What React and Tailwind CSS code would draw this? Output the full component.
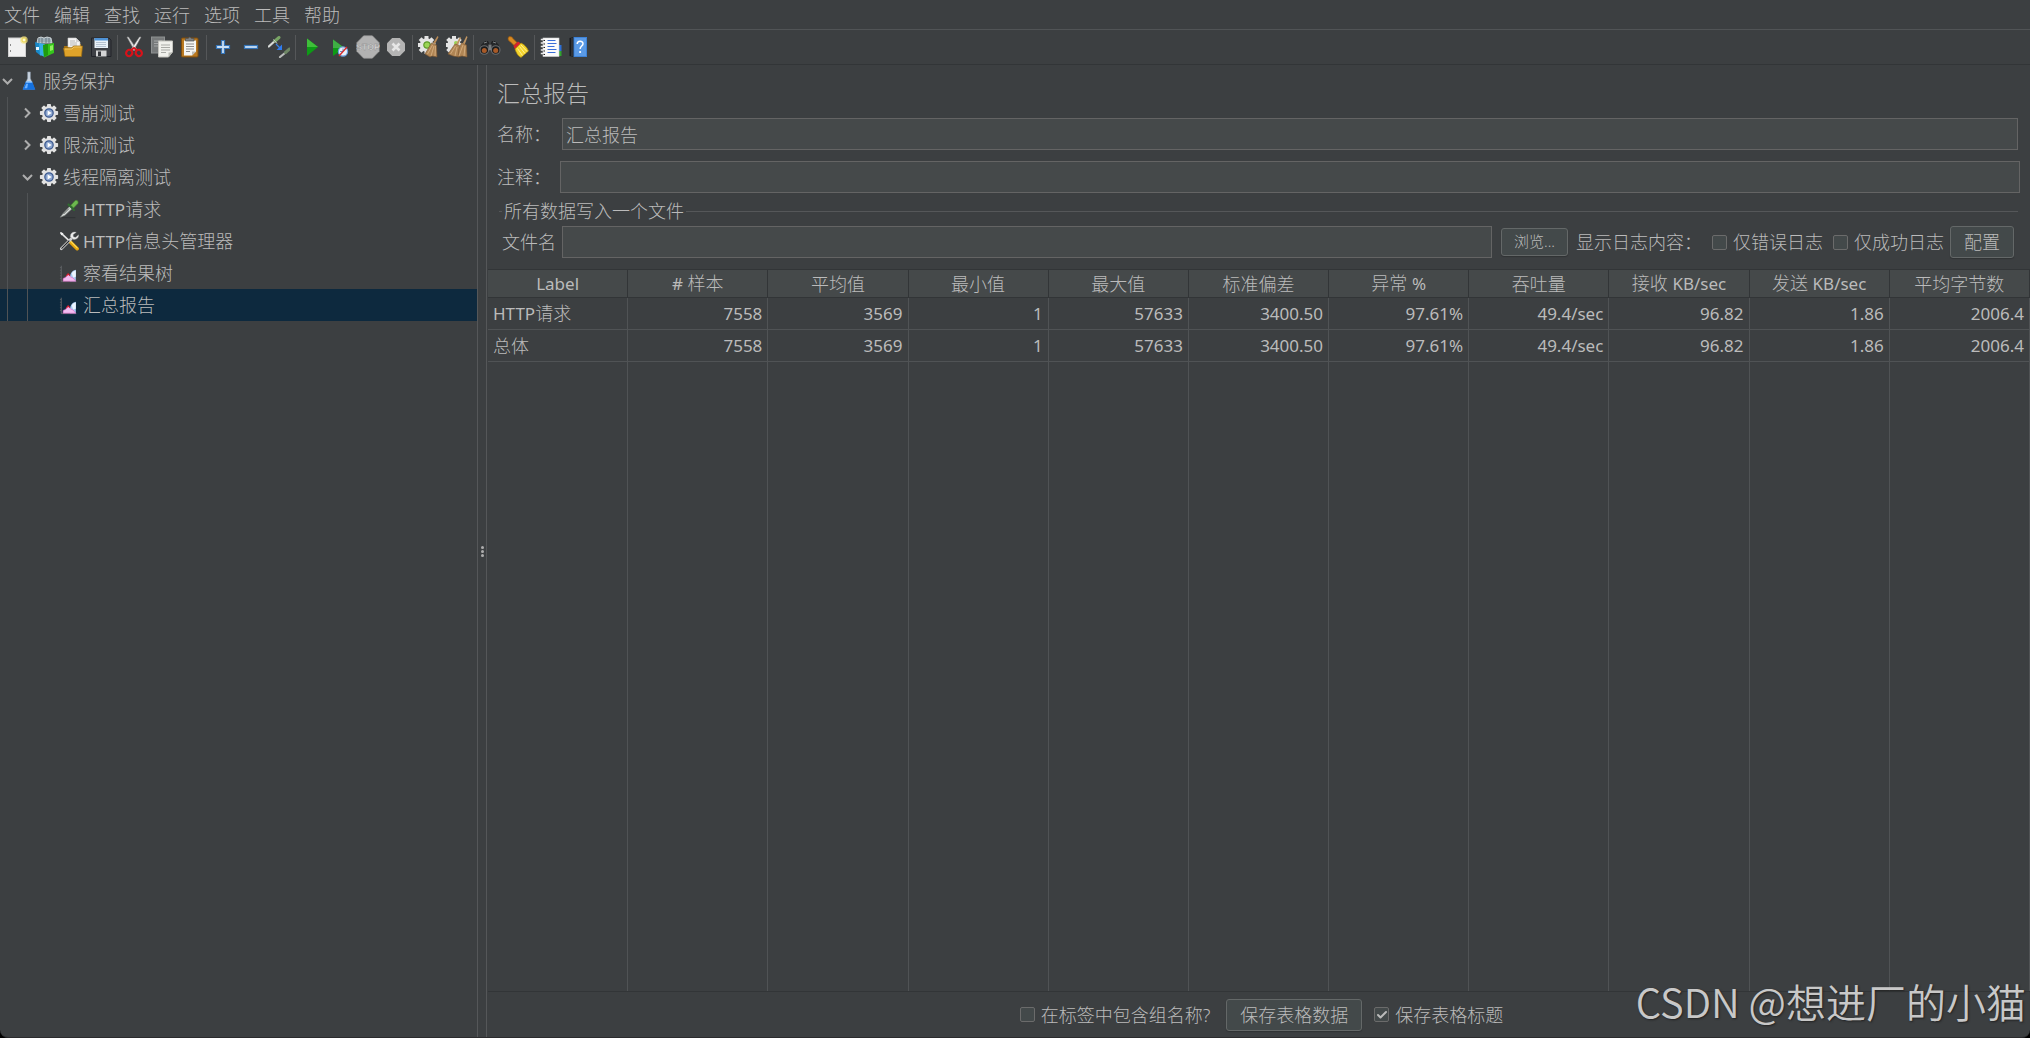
import { useState } from 'react';
import { Check } from 'lucide-react';

const menus = ['文件', '编辑', '查找', '运行', '选项', '工具', '帮助'];

const columns = ['Label', '# 样本', '平均值', '最小值', '最大值', '标准偏差', '异常 %', '吞吐量', '接收 KB/sec', '发送 KB/sec', '平均字节数'];

const rows = [
    ['HTTP请求', '7558', '3569', '1', '57633', '3400.50', '97.61%', '49.4/sec', '96.82', '1.86', '2006.4'],
    ['总体', '7558', '3569', '1', '57633', '3400.50', '97.61%', '49.4/sec', '96.82', '1.86', '2006.4'],
];

/* ---------- toolbar icons ---------- */

function Svg({ children, size = 'size-[22px]' }) {
    return (
        <svg viewBox="0 0 22 22" className={`${size} block shrink-0`} fill="none" aria-hidden="true">
            {children}
        </svg>
    );
}

const NewIcon = () => (
    <Svg>
        <rect x="2.5" y="2" width="17" height="18.5" fill="#f1f1f1" stroke="#cfcfcf" />
        <path d="M4.5 8v2M4.5 14v2" stroke="#8b8b8b" />
        <circle cx="18" cy="4" r="3.8" fill="#f3e27a" opacity=".7" />
        <circle cx="18" cy="4" r="2" fill="#fffbd0" stroke="#e3c934" strokeWidth=".8" />
    </Svg>
);

const TemplatesIcon = () => (
    <Svg>
        <path d="M3 7L4 2l3-1 3 1 3-1 4 1 1 5z" fill="#9fb0b8" stroke="#dfe6e9" strokeWidth=".8" />
        <path d="M5 2v5M8 2v5M12 2v5M15 2v5" stroke="#5d6b73" strokeWidth=".8" />
        <path d="M1 6l6 2v12l-5-4z" fill="#1888c8" />
        <path d="M5 7l6 1v13l-5-2z" fill="#36aee6" />
        <path d="M9 9l11-2v10l-10 4.500z" fill="#35c41c" />
        <path d="M9 9l5-1v11l-4 2z" fill="#1f9b10" />
        <path d="M16 10l3-1v5l-3 1z" fill="#8ff05d" />
        <rect x="2" y="11" width="3" height="3" fill="#e8f6ff" />
    </Svg>
);

const OpenIcon = () => (
    <Svg>
        <path d="M2 10h4l1-2h12v12H3z" fill="#a87410" />
        <path d="M6 11V2h8l4 4v6z" fill="#f4f4f4" stroke="#c9c9c9" strokeWidth=".6" />
        <path d="M14 2v4h4" fill="#d4d4d4" />
        <path d="M8 5h5M8 7h7M8 9h7" stroke="#a9a9a9" strokeWidth=".8" />
        <path d="M1.5 12h8l2-2h9l-1 10.5H3z" fill="#dfa32a" stroke="#9b6b10" strokeWidth=".7" />
        <path d="M3 13h7l2-2h7.5" stroke="#f5cf70" strokeWidth=".8" />
    </Svg>
);

const SaveIcon = () => (
    <Svg>
        <path d="M1.5 2h17.5l2 2v16.5H1.5z" fill="#3e4045" stroke="#22242a" />
        <rect x="4.5" y="2" width="13.5" height="10" fill="#eaf1f8" />
        <rect x="4.5" y="2" width="13.5" height="2.5" fill="#4f93d6" />
        <path d="M6 6.5h10M6 8.5h10M6 10.5h10" stroke="#a9b8c6" strokeWidth=".8" />
        <rect x="6" y="14.5" width="10.5" height="6" fill="#d4d5d6" />
        <rect x="8" y="15.5" width="3" height="4.5" fill="#33353a" />
    </Svg>
);

const CutIcon = () => (
    <Svg>
        <path d="M4 1l1.5 0 8 12-2 1.5z" fill="#e2e2e2" stroke="#8e8e8e" strokeWidth=".6" />
        <path d="M18 1l-1.5 0-8 12 2 1.5z" fill="#f4f4f4" stroke="#8e8e8e" strokeWidth=".6" />
        <ellipse cx="6.200" cy="17" rx="3" ry="3.300" stroke="#d8121a" strokeWidth="2.200" transform="rotate(35 6.200 17)" />
        <ellipse cx="15.800" cy="17" rx="3" ry="3.300" stroke="#d8121a" strokeWidth="2.200" transform="rotate(-35 15.800 17)" />
        <path d="M8 14l3-2 3 2" stroke="#d8121a" strokeWidth="2" />
    </Svg>
);

const CopyIcon = () => (
    <Svg>
        <rect x="0.5" y="1" width="13" height="16" fill="#777a7b" stroke="#8e9192" />
        <path d="M3 5h8M3 7.5h8M3 10h5" stroke="#a5a7a8" />
        <path d="M7.5 5h14v11l-4 5h-10z" fill="#f0f0ec" stroke="#c4c4be" />
        <path d="M10 9h9M10 11.5h9M10 14h9M10 16.5h5" stroke="#a9aaa6" />
        <path d="M17.5 21v-4.5h4z" fill="#b9bab4" />
    </Svg>
);

const PasteIcon = () => (
    <Svg>
        <rect x="2.5" y="2" width="16.5" height="19" rx="1" fill="#b9781f" stroke="#7c4c0e" />
        <path d="M5 4.5h12v11l-4 4H5z" fill="#f5f5f2" />
        <path d="M7 8h8M7 10.5h8M7 13h8M7 15.5h4" stroke="#8d8d8d" />
        <path d="M13 19.5v-4h4z" fill="#bdbdb8" />
        <path d="M6.5 5V2.5h2.500L10.800 1l1.800 1.500H15V5z" fill="#7f8284" stroke="#4d5052" strokeWidth=".7" />
    </Svg>
);

const PlusIcon = () => (
    <Svg>
        <path d="M9.5 4.5h3v5h5v3h-5v5h-3v-5h-5v-3h5z" fill="#c9dff5" stroke="#3474b8" strokeWidth="1.2" />
    </Svg>
);

const MinusIcon = () => (
    <Svg>
        <rect x="4.5" y="9.5" width="13" height="3" fill="#c9dff5" stroke="#3474b8" strokeWidth="1.2" />
    </Svg>
);

const ToggleIcon = () => (
    <Svg>
        <path d="M.8 10.5l6-5.500" stroke="#d7dad8" strokeWidth="2.2" strokeLinecap="round" />
        <path d="M7 5l4-3.500" stroke="#79a565" strokeWidth="3" strokeLinecap="round" />
        <path d="M5.5 3.5l3.500 4" stroke="#d0d4d1" strokeWidth="1" />
        <path d="M8 8l4.5 4.5" stroke="#3b82e8" strokeWidth="1.3" />
        <path d="M14 8.5v5.500H8.500z" fill="#2f7cf0" />
        <path d="M12 21l5-4" stroke="#b9bcba" strokeWidth="2.2" strokeLinecap="round" />
        <path d="M17.5 16.5l4-3.500" stroke="#6e8765" strokeWidth="3" strokeLinecap="round" />
    </Svg>
);

const StartIcon = () => (
    <Svg>
        <path d="M6 2.5L17 11 6 20z" fill="#0e9a16" />
        <path d="M6 2.5L17 11H6z" fill="#3fbf3a" />
    </Svg>
);

const StartNoPauseIcon = () => (
    <Svg>
        <path d="M4 3.5L15.500 12 4 20z" fill="#0e9a16" />
        <path d="M4 3.5L15.500 12H4z" fill="#3fae45" />
        <circle cx="14" cy="15.5" r="4.6" fill="#e9f1fb" stroke="#6d9fdd" strokeWidth="1.2" />
        <path d="M14 12.5v3h-3" stroke="#4a78b5" strokeWidth=".8" />
        <path d="M10 20l8-9" stroke="#d92a2a" strokeWidth="1.4" />
    </Svg>
);

const StopIcon = () => (
    <Svg size="size-6">
        <path d="M7 .8h8L21.200 7v8L15 21.200H7L.8 15V7z" fill="#b2b2b2" stroke="#a0a0a0" strokeWidth=".6" />
        <text x="11" y="14" textAnchor="middle" fontSize="8" fontWeight="bold" fill="#dedede" stroke="#858585" strokeWidth=".3" fontFamily="Liberation Sans, sans-serif">STOP</text>
    </Svg>
);

const ShutdownIcon = () => (
    <Svg>
        <path d="M7.200 2h7.600L20 7.200v7.600L14.800 20H7.200L2 14.800V7.200z" fill="#b4b4b4" />
        <path d="M7.5 7.5l7 7M14.5 7.5l-7 7" stroke="#e6e6e6" strokeWidth="2.6" />
    </Svg>
);

const gearTeeth = [0, 45, 90, 135, 180, 225, 270, 315];

const ClearIcon = () => (
    <Svg>
        {gearTeeth.map((a) => (
            <rect key={a} x="6.5" y="0" width="4" height="4" fill="#e4e4e4" transform={`rotate(${a} 8.5 9)`} />
        ))}
        <circle cx="8.5" cy="9" r="6.8" fill="#e4e4e4" />
        <circle cx="9" cy="9" r="3.2" fill="#9ad455" stroke="#5f9b2b" strokeWidth="1.2" />
        <path d="M19.5 0l1 1-3.500 7-2-1z" fill="#b98a55" />
        <path d="M13.500 7l5 2 .5 12-5-1-2 1-5-3z" fill="#b08554" stroke="#7a5630" strokeWidth=".6" />
        <path d="M14.5 9l-5 9M16 10l-3 10M17.5 10l-.5 10" stroke="#d8b285" strokeWidth=".8" />
    </Svg>
);

const ClearAllIcon = () => (
    <Svg>
        {gearTeeth.map((a) => (
            <rect key={a} x="6" y="0" width="4" height="4" fill="#e4e4e4" transform={`rotate(${a} 8 9)`} />
        ))}
        <circle cx="8" cy="9" r="6.8" fill="#e4e4e4" />
        <circle cx="10" cy="7" r="2" fill="#9ad455" />
        <path d="M14 1l1 1-3 7-2-1zM20.5 0l1 1-3 8-2-1z" fill="#c09562" />
        <path d="M9 8l4.500 1.500L13 21l-6-1-5-2z" fill="#b08554" stroke="#7a5630" strokeWidth=".6" />
        <path d="M15.5 7l5 2 .5 12-5-1-4 1 1-8z" fill="#b08554" stroke="#7a5630" strokeWidth=".6" />
        <path d="M9.5 10l-5 8M11 11l-2 9M17 9l-4 11M19 10l-1 10" stroke="#d8b285" strokeWidth=".8" />
    </Svg>
);

const SearchIcon = () => (
    <Svg>
        <path d="M6 5.5l3 0 1 3h2l1-3h3l3 3 1.500 6H1L3 8.500z" fill="#26282a" stroke="#151617" strokeWidth=".6" />
        <path d="M5 7l3-1M14 6l3 1" stroke="#7e8386" strokeWidth="1" />
        <circle cx="5.3" cy="14" r="4.3" fill="#1b1c1d" stroke="#6a6d70" strokeWidth="1.1" />
        <circle cx="16.7" cy="14" r="4.3" fill="#1b1c1d" stroke="#6a6d70" strokeWidth="1.1" />
        <circle cx="5.3" cy="14.5" r="2.5" fill="#a85a28" />
        <circle cx="16.7" cy="14.5" r="2.5" fill="#a85a28" />
        <rect x="9.5" y="8.5" width="3" height="6" fill="#7b7e80" />
    </Svg>
);

const ResetSearchIcon = () => (
    <Svg>
        <path d="M1.5 1c2-1 4 0 4.500 1.500l4 4-3 3-4-4C1.500 5 .5 3 1.500 1z" fill="#d98a22" stroke="#8f5510" strokeWidth=".7" />
        <path d="M6.5 10L11 5.500l3 2L8 13.500z" fill="#d8232a" />
        <path d="M8 13l6-6c3 1.500 6 4 7.500 8L14 21.500C10.500 20 9 16 8 13z" fill="#f3d32c" stroke="#a8870d" strokeWidth=".7" />
        <path d="M10.5 12.5l5 7M12.5 10.5l5.500 7M14 9l6 6.500" stroke="#fff4a0" strokeWidth=".9" />
    </Svg>
);

const FunctionHelperIcon = () => (
    <Svg>
        <rect x="18" y="9" width="3.5" height="6" fill="#2c6fd6" />
        <rect x="18" y="15" width="3.5" height="5" fill="#2fa32f" />
        <rect x="3" y="2" width="16" height="18.5" fill="#fbfbfb" stroke="#d2d2d2" strokeWidth=".6" />
        <path d="M7.500 4.500h8M7.500 7.500h9M7.500 10.500h7M7.500 13.500h9M7.500 16.500h8" stroke="#3a6ed8" strokeWidth="1" />
        <path d="M.8 3.500h4M.8 7h4M.8 10.500h4M.8 14h4M.8 17.500h4" stroke="#e8e8e8" strokeWidth="1.4" />
        <path d="M3.5 4.500h1.500M3.5 8h1.500M3.5 11.500h1.500M3.5 15h1.500M3.5 18.500h1.500" stroke="#222" strokeWidth="1" />
    </Svg>
);

const HelpIcon = () => (
    <Svg>
        <path d="M1.500 2L6 1v20l-4.500-1z" fill="#17191c" />
        <path d="M4 2v18" stroke="#5c6066" strokeWidth=".7" />
        <rect x="5.5" y="1" width="13.5" height="20" fill="#3e83d8" />
        <rect x="6.5" y="2" width="11.5" height="18" fill="#5a9ae6" />
        <path d="M9.200 8c0-3.700 5.800-3.700 5.800-.3 0 2.300-2.900 2.500-2.900 5.300" stroke="#fff" strokeWidth="1.500" />
        <circle cx="12.1" cy="16" r="1.1" fill="#fff" />
    </Svg>
);

const toolbar = [
    [['新建', NewIcon], ['模板', TemplatesIcon], ['打开', OpenIcon], ['保存', SaveIcon]],
    [['剪切', CutIcon], ['复制', CopyIcon], ['粘贴', PasteIcon]],
    [['展开', PlusIcon], ['折叠', MinusIcon], ['切换', ToggleIcon]],
    [['启动', StartIcon], ['不停顿启动', StartNoPauseIcon], ['停止', StopIcon], ['关闭', ShutdownIcon]],
    [['清除', ClearIcon], ['清除全部', ClearAllIcon]],
    [['搜索', SearchIcon], ['重置搜索', ResetSearchIcon]],
    [['函数助手', FunctionHelperIcon], ['帮助', HelpIcon]],
];

/* ---------- tree icons ---------- */

const FlaskIcon = () => (
    <Svg size="size-5">
        <path d="M9.500 1h3v7l4.500 12H4.500L9.500 8z" fill="#c9d4e0" stroke="#8697a9" strokeWidth=".6" />
        <path d="M7.300 12h7.400l3.300 8.500H4z" fill="#1471e0" />
        <path d="M8 14l-2 5h3l1-5z" fill="#6db2ff" />
        <ellipse cx="11" cy="12" rx="3.7" ry="1" fill="#8cc4ff" />
    </Svg>
);

const GearIcon = () => (
    <Svg size="size-5">
        {gearTeeth.map((a) => (
            <rect key={a} x="8.8" y="1" width="4.4" height="5" rx=".8" fill="#e2e2e2" transform={`rotate(${a} 11 11)`} />
        ))}
        <circle cx="11" cy="11" r="7.800" fill="#e2e2e2" />
        <circle cx="11" cy="11" r="4.600" fill="#8ba5cf" stroke="#3d5a90" strokeWidth="1.400" />
        <path d="M9.500 8.200l4.500 2.800-4.500 2.800z" fill="#fff" />
    </Svg>
);

const PipetteIcon = () => (
    <Svg size="size-5">
        <path d="M3 20.500h15" stroke="#303234" strokeWidth="1.200" />
        <path d="M1.500 20l3-4L12 8l2.500 2.500-8 7.500z" fill="#d9dddb" stroke="#8a8f8c" strokeWidth=".7" />
        <path d="M5 16.500l6-6" stroke="#4f5452" strokeWidth="1" />
        <path d="M10.500 6l6 6" stroke="#2f6a2f" strokeWidth="2.400" strokeLinecap="round" />
        <path d="M13 7l4.500-5c2-1.500 4.500.5 3.300 3L16 10z" fill="#6db84f" stroke="#3d7f2d" strokeWidth=".7" />
    </Svg>
);

const ToolsIcon = () => (
    <Svg size="size-5">
        <path d="M2 2l10 9.500" stroke="#e6e6e6" strokeWidth="1.800" />
        <path d="M1 1l4 1.500-2.500 2.500z" fill="#f2f2f2" />
        <path d="M12.500 12l7.500 7.500" stroke="#e5a50f" strokeWidth="3.800" strokeLinecap="round" />
        <path d="M13 11.500l7 7" stroke="#ffdf58" strokeWidth="1.200" strokeLinecap="round" />
        <path d="M13.500 8.500L2.500 19.500" stroke="#d2d2d2" strokeWidth="3" strokeLinecap="round" />
        <path d="M11 11l-8 8" stroke="#26282a" strokeWidth="1.200" strokeLinecap="round" />
        <path d="M19 1.500l-3.500 2.500.5 2.500 2.500.5L21.500 4c.8 4-3 6-6 5l-3-2.500c-.5-4 3-6.500 6.500-5z" fill="#ececec" stroke="#9a9a9a" strokeWidth=".4" />
    </Svg>
);

const ChartIcon = () => (
    <Svg size="size-5">
        <path d="M2.500 3v17.500H19" stroke="#63676a" strokeWidth="1" />
        <path d="M1 5h1.500M1 8h1.500M1 11h1.500M1 14h1.500M1 17h1.500" stroke="#63676a" strokeWidth=".8" />
        <path d="M12 17c0-5 2-8.500 6.500-9.500V20H12z" fill="#a9cbf5" />
        <path d="M14 11c1.500-1.500 3-2.500 4.500-3v7l-3 1z" fill="#ecf5ff" />
        <path d="M4.500 20v-3l2.500-1 3-3.500 3 3 2.500 1 3 3.500z" fill="#f3bdf0" stroke="#e05cc0" strokeWidth=".6" />
        <path d="M8 14.500l2-2.500 2 2" stroke="#d31f2f" strokeWidth="1.200" />
    </Svg>
);

const tree = [
    { level: 0, arrow: 'open', icon: FlaskIcon, text: '服务保护' },
    { level: 1, arrow: 'closed', icon: GearIcon, text: '雪崩测试' },
    { level: 1, arrow: 'closed', icon: GearIcon, text: '限流测试' },
    { level: 1, arrow: 'open', icon: GearIcon, text: '线程隔离测试' },
    { level: 2, icon: PipetteIcon, text: 'HTTP请求' },
    { level: 2, icon: ToolsIcon, text: 'HTTP信息头管理器' },
    { level: 2, icon: ChartIcon, text: '察看结果树' },
    { level: 2, icon: ChartIcon, text: '汇总报告' },
];

// Latin runs are set one step smaller and heavier than the Chinese beside them
function Mixed({ children }) {
    return children.split(/([\x21-\x7e][\x20-\x7e]*)/).map((part, i) => (
        i % 2 ? <span key={i} className="text-[17px] font-normal">{part}</span> : part
    ));
}

function Arrow({ type }) {
    return (
        <svg viewBox="0 0 20 20" className="-ml-[3px] block size-5 shrink-0" fill="none" stroke="#adadad" strokeWidth="2" aria-hidden="true">
            {type === 'open' && <path d="M6 8l4.500 4.500L15 8" />}
            {type === 'closed' && <path d="M8 5.500l4.500 4.500L8 14.500" />}
        </svg>
    );
}

function Tree() {
    const [selected, setSelected] = useState(7);

    return (
        <ul>
            {tree.map((node, i) => (
                <li key={i} className={`flex h-8 ${selected === i ? 'bg-[#0d293e]' : ''}`}>
                    {node.level > 0 && <span className="w-5 shrink-0 pl-[7px]"><i className="block h-full w-px bg-[#505355]" /></span>}
                    {node.level > 1 && <span className="w-5 shrink-0 pl-[7px]"><i className="block h-full w-px bg-[#505355]" /></span>}
                    <button onClick={() => setSelected(i)} className="flex flex-1 items-center text-left">
                        <Arrow type={node.arrow} />
                        <span className="ml-0.5"><node.icon /></span>
                        <span className="ml-1"><Mixed>{node.text}</Mixed></span>
                    </button>
                </li>
            ))}
        </ul>
    );
}

function CheckBox({ label, defaultChecked }) {
    return (
        <label className="flex items-center gap-1.5 whitespace-nowrap">
            <span className="grid place-items-center">
                <input
                    type="checkbox"
                    defaultChecked={defaultChecked}
                    className="peer col-start-1 row-start-1 size-[15px] appearance-none rounded-xs border border-[#6b6b6b] bg-[#43494a]"
                />
                <Check className="pointer-events-none col-start-1 row-start-1 hidden size-3 text-[#bbbbbb] peer-checked:block" strokeWidth={4} />
            </span>
            {label}
        </label>
    );
}

const inputStyle = 'h-8 min-w-0 flex-1 border border-[#646464] bg-[#45494a] px-[3px] outline-none';
const buttonStyle = 'shrink-0 rounded-[3px] border border-[#646868] bg-[#43494a] shadow-[0_1px_1px_#303335] hover:bg-[#4c5354]';

function SummaryReport() {
    return (
        <main className="flex min-w-0 flex-1 flex-col">
            <h1 className="mt-3 h-8 pl-2.5 text-[23px] leading-8">汇总报告</h1>

            <div className="mt-[9px] flex items-center pr-3 pl-2.5">
                <label htmlFor="name" className="w-[65px]">名称：</label>
                <input id="name" type="text" defaultValue="汇总报告" className={inputStyle} />
            </div>
            <div className="mt-[11px] flex items-center pr-2.5 pl-2.5">
                <label htmlFor="comment" className="w-[63px]">注释：</label>
                <input id="comment" type="text" className={inputStyle} />
            </div>

            <fieldset className="mx-3 mt-2 min-w-0 border-t border-[#555759]">
                <legend className="ml-[3px] h-5 px-0.5 leading-5">所有数据写入一个文件</legend>
                <div className="mt-[5px] flex items-center pr-1 pl-[3px]">
                    <label htmlFor="filename" className="w-[60px]">文件名</label>
                    <input id="filename" type="text" className={inputStyle} />
                    <button className={`${buttonStyle} ml-[9px] h-7 w-[67px] text-[15px]`}>浏览...</button>
                    <span className="mr-2.5 ml-2 whitespace-nowrap">显示日志内容：</span>
                    <CheckBox label="仅错误日志" />
                    <span className="w-2.5" />
                    <CheckBox label="仅成功日志" />
                    <button className={`${buttonStyle} ml-1.5 h-8 w-16`}>配置</button>
                </div>
            </fieldset>

            {/* Results table */}
            <div className="mt-[11px] min-h-0 flex-1 pl-px">
                <table className="h-full w-full table-fixed border-separate border-spacing-0 border-b border-[#323537]">
                    <thead className="bg-[#45494a]">
                        <tr className="h-[29px]">
                            {columns.map((c) => (
                                <th key={c} className="border-y border-r border-[#323537] p-0 font-light leading-6"><Mixed>{c}</Mixed></th>
                            ))}
                        </tr>
                    </thead>
                    <tbody>
                        {rows.map((row) => (
                            <tr key={row[0]} className="h-8">
                                {row.map((cell, i) => (
                                    <td key={i} className="border-r border-b border-[#505355] px-[5px] py-0 text-right leading-6 first:text-left">
                                        <Mixed>{cell}</Mixed>
                                    </td>
                                ))}
                            </tr>
                        ))}
                        <tr>
                            {columns.map((c) => (
                                <td key={c} className="border-r border-[#505355]" />
                            ))}
                        </tr>
                    </tbody>
                </table>
            </div>

            <footer className="flex h-[45px] items-center justify-center pl-1.5">
                <CheckBox label="在标签中包含组名称?" />
                <button className={`${buttonStyle} mr-3 ml-4 h-8 px-[13px]`}>保存表格数据</button>
                <CheckBox label="保存表格标题" defaultChecked />
            </footer>
        </main>
    );
}

function App() {
    return (
        <div className="h-screen bg-black font-['Noto_Sans','Noto_Sans_CJK_SC',sans-serif] text-lg font-light text-[#bbbbbb]">
            <div className="relative flex h-full flex-col overflow-hidden rounded-b-lg border-b border-[#2b2b2d] bg-[#3c3f41]">
                <nav className="flex h-[30px] shrink-0 items-center gap-3.5 border-b border-[#515456] pl-1">
                    {menus.map((m) => (
                        <button key={m} className="leading-7">{m}</button>
                    ))}
                </nav>

                <div className="flex h-[35px] shrink-0 items-center border-b border-[#323537] pl-[3px]">
                    {toolbar.map((group, g) => (
                        <div key={g} className="flex items-center">
                            {g > 0 && <span className="mx-0.5 h-[25px] w-px bg-[#555759]" />}
                            {group.map(([name, Icon]) => (
                                <button key={name} aria-label={name} className="flex h-7 w-7 items-center justify-center">
                                    <Icon />
                                </button>
                            ))}
                        </div>
                    ))}
                </div>

                <div className="flex min-h-0 flex-1">
                    <aside className="w-[477px] shrink-0">
                        <Tree />
                    </aside>
                    <div className="flex w-2.5 shrink-0 cursor-col-resize flex-col items-center justify-center gap-px border-x border-[#555759]">
                        <i className="size-[3px] rounded-full bg-[#adadad]" />
                        <i className="size-[3px] rounded-full bg-[#adadad]" />
                        <i className="size-[3px] rounded-full bg-[#adadad]" />
                    </div>
                    <SummaryReport />
                </div>

                <p className="pointer-events-none absolute right-1 bottom-3 font-['Noto_Sans_CJK_SC',sans-serif] text-[40px] leading-12 font-[350] text-[#c8c8c8] [text-shadow:1px_1px_2px_#222]">
                    CSDN @想进厂的小猫
                </p>
            </div>
        </div>
    );
}

export default App;
